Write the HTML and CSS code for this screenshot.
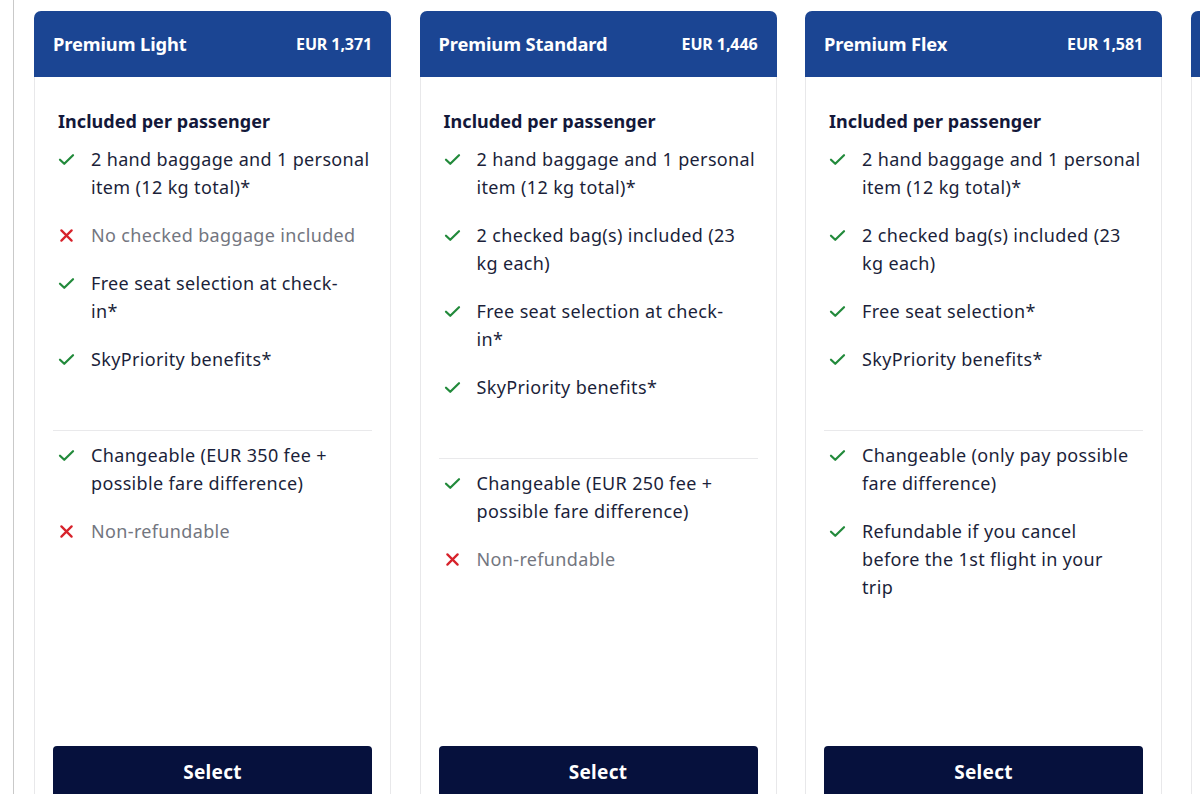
FILE: index.html
```html
<!DOCTYPE html>
<html lang="en">
<head>
<meta charset="utf-8">
<title>Premium fares</title>
<link rel="stylesheet" href="styles.css">
</head>
<body>
<div class="page">
  <div class="cards">
    <section class="card">
      <header class="card-head"><span class="name">Premium Light</span><span class="price">EUR 1,371</span></header>
      <div class="card-body">
        <h3 class="heading">Included per passenger</h3>
        <ul class="list list-top">
          <li class="yes"><span class="ic"><svg viewBox="0 0 18 14"><path d="M2 7.2l4.6 4.4L16 2.4"/></svg></span><span>2 hand baggage and 1 personal item (12 kg total)*</span></li>
          <li class="no"><span class="ic"><svg viewBox="0 0 18 14"><path d="M3.5 1.5l11 11M14.5 1.5l-11 11"/></svg></span><span>No checked baggage included</span></li>
          <li class="yes"><span class="ic"><svg viewBox="0 0 18 14"><path d="M2 7.2l4.6 4.4L16 2.4"/></svg></span><span>Free seat selection at check-<br>in*</span></li>
          <li class="yes"><span class="ic"><svg viewBox="0 0 18 14"><path d="M2 7.2l4.6 4.4L16 2.4"/></svg></span><span>SkyPriority benefits*</span></li>
        </ul>
        <ul class="list list-bottom">
          <li class="yes"><span class="ic"><svg viewBox="0 0 18 14"><path d="M2 7.2l4.6 4.4L16 2.4"/></svg></span><span>Changeable (EUR 350 fee + possible fare difference)</span></li>
          <li class="no"><span class="ic"><svg viewBox="0 0 18 14"><path d="M3.5 1.5l11 11M14.5 1.5l-11 11"/></svg></span><span>Non-refundable</span></li>
        </ul>
        <button class="select">Select</button>
      </div>
    </section>
    <section class="card">
      <header class="card-head"><span class="name">Premium Standard</span><span class="price">EUR 1,446</span></header>
      <div class="card-body">
        <h3 class="heading">Included per passenger</h3>
        <ul class="list list-top">
          <li class="yes"><span class="ic"><svg viewBox="0 0 18 14"><path d="M2 7.2l4.6 4.4L16 2.4"/></svg></span><span>2 hand baggage and 1 personal item (12 kg total)*</span></li>
          <li class="yes"><span class="ic"><svg viewBox="0 0 18 14"><path d="M2 7.2l4.6 4.4L16 2.4"/></svg></span><span>2 checked bag(s) included (23<br>kg each)</span></li>
          <li class="yes"><span class="ic"><svg viewBox="0 0 18 14"><path d="M2 7.2l4.6 4.4L16 2.4"/></svg></span><span>Free seat selection at check-<br>in*</span></li>
          <li class="yes"><span class="ic"><svg viewBox="0 0 18 14"><path d="M2 7.2l4.6 4.4L16 2.4"/></svg></span><span>SkyPriority benefits*</span></li>
        </ul>
        <ul class="list list-bottom">
          <li class="yes"><span class="ic"><svg viewBox="0 0 18 14"><path d="M2 7.2l4.6 4.4L16 2.4"/></svg></span><span>Changeable (EUR 250 fee + possible fare difference)</span></li>
          <li class="no"><span class="ic"><svg viewBox="0 0 18 14"><path d="M3.5 1.5l11 11M14.5 1.5l-11 11"/></svg></span><span>Non-refundable</span></li>
        </ul>
        <button class="select">Select</button>
      </div>
    </section>
    <section class="card">
      <header class="card-head"><span class="name">Premium Flex</span><span class="price">EUR 1,581</span></header>
      <div class="card-body">
        <h3 class="heading">Included per passenger</h3>
        <ul class="list list-top">
          <li class="yes"><span class="ic"><svg viewBox="0 0 18 14"><path d="M2 7.2l4.6 4.4L16 2.4"/></svg></span><span>2 hand baggage and 1 personal item (12 kg total)*</span></li>
          <li class="yes"><span class="ic"><svg viewBox="0 0 18 14"><path d="M2 7.2l4.6 4.4L16 2.4"/></svg></span><span>2 checked bag(s) included (23<br>kg each)</span></li>
          <li class="yes"><span class="ic"><svg viewBox="0 0 18 14"><path d="M2 7.2l4.6 4.4L16 2.4"/></svg></span><span>Free seat selection*</span></li>
          <li class="yes"><span class="ic"><svg viewBox="0 0 18 14"><path d="M2 7.2l4.6 4.4L16 2.4"/></svg></span><span>SkyPriority benefits*</span></li>
        </ul>
        <ul class="list list-bottom">
          <li class="yes"><span class="ic"><svg viewBox="0 0 18 14"><path d="M2 7.2l4.6 4.4L16 2.4"/></svg></span><span>Changeable (only pay possible fare difference)</span></li>
          <li class="yes"><span class="ic"><svg viewBox="0 0 18 14"><path d="M2 7.2l4.6 4.4L16 2.4"/></svg></span><span>Refundable if you cancel<br>before the 1st flight in your<br>trip</span></li>
        </ul>
        <button class="select">Select</button>
      </div>
    </section>
    <section class="card">
      <header class="card-head"></header>
      <div class="card-body"></div>
    </section>
  </div>
</div>
</body>
</html>
```

FILE: styles.css
```css
html, body {
  margin: 0;
  padding: 0;
  background: #ffffff;
  overflow: hidden;
  height: 794px;
}
body {
  font-family: "Noto Sans", "Open Sans", Arial, sans-serif;
  color: #1b1f3a;
}
.page {
  margin-left: 13px;
  border-left: 1px solid #c9c9c9;
  height: 794px;
  padding: 11px 0 0 20px;
  box-sizing: border-box;
}
.cards {
  display: flex;
  gap: 28.5px;
  width: 1500px;
}
.card {
  flex: 0 0 357px;
  height: 808px;
  box-sizing: border-box;
  border: 1px solid #e8e8ea;
  border-top: none;
  border-radius: 7px 7px 0 0;
  display: flex;
  flex-direction: column;
}
.card-head {
  box-sizing: border-box;
  height: 66px;
  flex: 0 0 66px;
  background: #1b4593;
  border-radius: 7px 7px 0 0;
  margin: 0 -1px;
  display: flex;
  align-items: center;
  justify-content: space-between;
  padding: 0 19px 1px;
  color: #ffffff;
  font-weight: 700;
}
.name { font-size: 18.3px; letter-spacing: -0.1px; }
.price { font-size: 16px; letter-spacing: -0.1px; }
.card-body {
  flex: 1;
  display: flex;
  flex-direction: column;
  padding: 32px 18px 20px;
}
.heading {
  margin: 0;
  padding-left: 5px;
  font-size: 18px;
  line-height: 24px;
  font-weight: 700;
  letter-spacing: 0.05px;
  color: #13183a;
}
.list {
  list-style: none;
  margin: 0;
  padding: 0 0 0 5px;
  display: flex;
  flex-direction: column;
  gap: 20px;
}
.list-top {
  margin-top: 12px;
  padding-bottom: 57px;
  border-bottom: 1px solid #e9e9eb;
}
.list-bottom {
  padding-top: 10px;
}
.list li {
  display: flex;
  gap: 16px;
  font-size: 18px;
  letter-spacing: 0.35px;
  line-height: 28px;
  color: #1b1f3a;
}
.list li.no { color: #73767f; }
.ic {
  flex: 0 0 17px;
  height: 28px;
  display: flex;
  align-items: center;
}
.ic svg {
  width: 17px;
  height: 13px;
  fill: none;
  stroke-width: 2.4;
  stroke-linecap: round;
  stroke-linejoin: round;
}
.yes .ic svg { stroke: #228a3b; }
.no .ic svg { stroke: #d7222b; }
.select {
  margin-top: auto;
  height: 52px;
  flex: 0 0 52px;
  border: none;
  border-radius: 4px;
  background: #06113d;
  color: #ffffff;
  font-family: inherit;
  font-size: 19px;
  letter-spacing: 0.3px;
  font-weight: 700;
  cursor: pointer;
}
```
